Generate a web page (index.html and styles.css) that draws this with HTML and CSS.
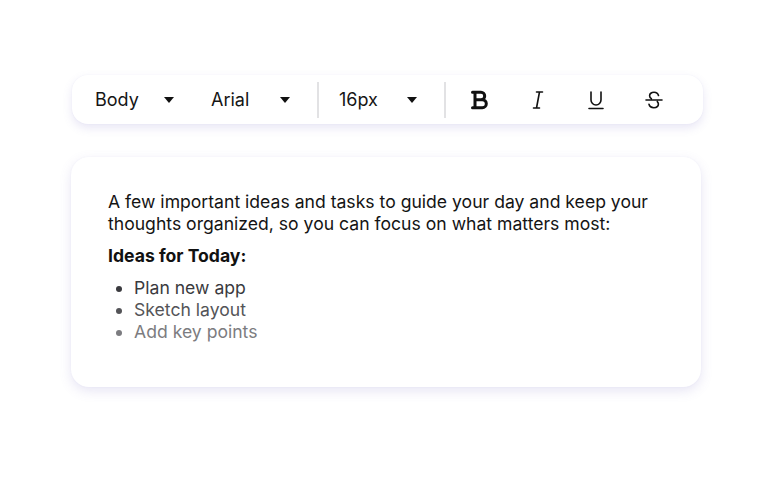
FILE: index.html
```html
<!DOCTYPE html>
<html>
<head>
<meta charset="utf-8">
<link rel="stylesheet" href="styles.css">
</head>
<body>
<div class="page">
  <div class="toolbar">
    <div class="select sel-style"><span>Body</span><span class="caret"></span></div>
    <div class="select sel-font"><span>Arial</span><span class="caret"></span></div>
    <div class="divider"></div>
    <div class="select sel-size"><span>16px</span><span class="caret"></span></div>
    <div class="divider"></div>
    <div class="icons">
      <svg class="icon" viewBox="0 0 24 24" fill="none" stroke="#111" stroke-width="3" stroke-linejoin="round" stroke-linecap="round"><path d="M4.5 4.3h8.5a3.7 3.7 0 0 1 0 7.4H7M7 4.3v15.4M7 11.7h7.3a4 4 0 0 1 0 8H4.5"/></svg>
      <svg class="icon" viewBox="0 0 24 24" fill="none" stroke="#111" stroke-width="1.6" stroke-linecap="round"><path d="M10.5 4h6M7.5 20h6M13.5 4l-3 16"/></svg>
      <svg class="icon" viewBox="0 0 24 24" fill="none" stroke="#111" stroke-width="1.6" stroke-linecap="round"><path d="M7 4v8a5 5 0 0 0 10 0V4M5 20.5h14"/></svg>
      <svg class="icon" viewBox="0 0 24 24" fill="none" stroke="#111" stroke-width="1.6" stroke-linecap="round"><path d="M16.5 7.5C16 5.5 14.3 4.3 12 4.3c-2.6 0-4.4 1.4-4.4 3.4 0 1.2.6 2.2 1.8 2.9M15.3 13.6c.7.7 1.1 1.5 1.1 2.5 0 2.1-1.9 3.6-4.6 3.6-2.5 0-4.3-1.3-4.8-3.4M4 12h16"/></svg>
    </div>
  </div>

  <div class="card">
    <p class="intro">A few important ideas and tasks to guide your day and keep your thoughts organized, so you can focus on what matters most:</p>
    <p class="heading">Ideas for Today:</p>
    <ul class="list">
      <li class="i1">Plan new app</li>
      <li class="i2">Sketch layout</li>
      <li class="i3">Add key points</li>
    </ul>
  </div>
</div>
</body>
</html>
```

FILE: styles.css
```css
* { box-sizing: border-box; }
html, body {
  margin: 0;
  padding: 0;
  background: #ffffff;
}
body {
  font-family: "Inter", "Noto Sans", sans-serif;
  color: #141414;
}
.page {
  padding-top: 75px;
  padding-left: 71px;
  width: 776px;
  height: 500px;
}
.toolbar {
  margin-left: 1px;
  width: 631px;
  height: 49px;
  background: #fff;
  border-radius: 16px;
  box-shadow: 0 4px 10px rgba(110, 100, 190, 0.16), 0 0 2px rgba(110, 100, 190, 0.06);
  display: flex;
  align-items: center;
  padding-left: 23px;
}
.select {
  display: flex;
  align-items: center;
  justify-content: space-between;
  font-size: 18px;
  color: #151515;
  height: 24px;
}
.sel-style { width: 79px; margin-right: 37px; }
.sel-font { width: 79px; margin-right: 27px; }
.sel-size { width: 78px; margin-left: 20px; margin-right: 27px; }
.caret {
  width: 0;
  height: 0;
  border-left: 5.5px solid transparent;
  border-right: 5.5px solid transparent;
  border-top: 6px solid #111;
  margin-top: 1px;
}
.divider {
  width: 2px;
  height: 36px;
  background: #e2e2e4;
}
.icons {
  display: flex;
  align-items: center;
  gap: 34px;
  margin-left: 22px;
}
.icon {
  width: 24px;
  height: 24px;
  display: block;
}
.card {
  margin-top: 33px;
  width: 630px;
  height: 230px;
  background: #fff;
  border-radius: 18px;
  box-shadow: 0 4px 12px rgba(110, 100, 190, 0.17), 0 0 2px rgba(110, 100, 190, 0.06);
  padding: 34px 37px 0 37px;
  font-size: 17.6px;
  line-height: 22px;
}
.intro {
  margin: 0;
  color: #141414;
}
.heading {
  margin: 10px 0 0 0;
  font-weight: 700;
  color: #111;
}
.list {
  margin: 10px 0 0 0;
  padding-left: 26px;
}
.i1 { color: #3a3a3e; }
.i2 { color: #545458; }
.i3 { color: #7c7c80; }
```
